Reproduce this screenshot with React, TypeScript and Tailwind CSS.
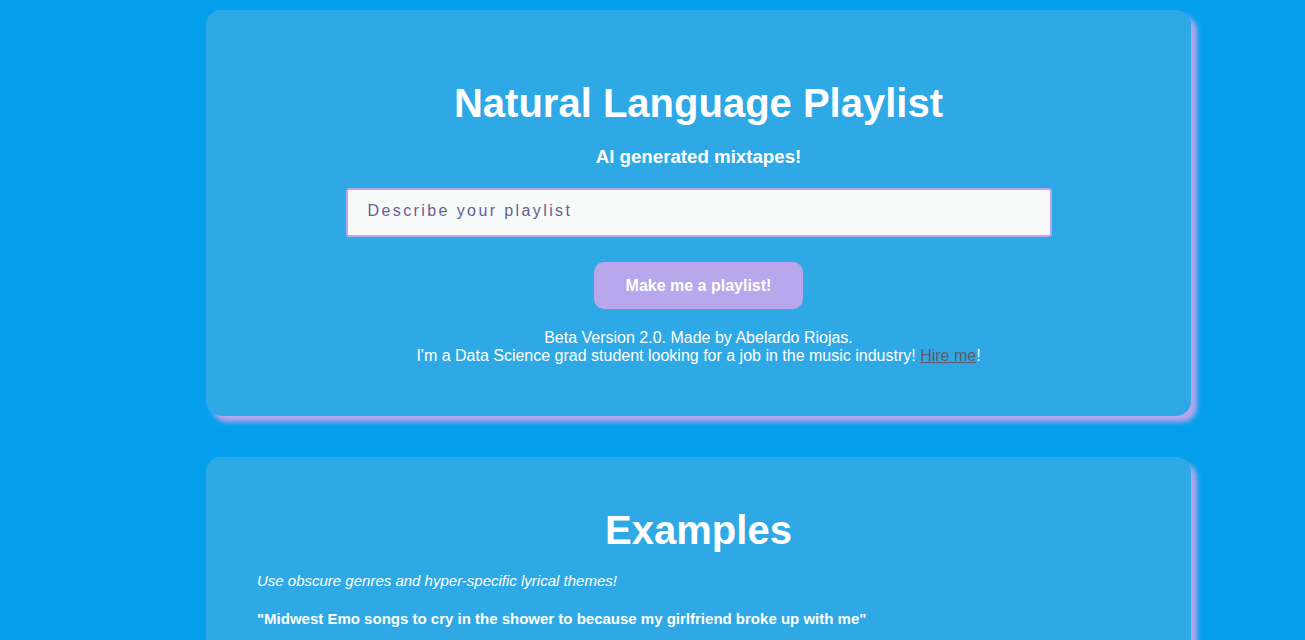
const App = () => {
  return (
    <div
      className="min-h-screen bg-[#039fec] pt-[10px] pb-10 pl-[206px] text-white"
      style={{ fontFamily: '"Liberation Sans", Arial, sans-serif' }}
    >
      {/* Main card */}
      <div className="w-[985px] rounded-[15px] bg-[#2ea9e5] shadow-[6px_6px_5px_#b7a6ec] pt-[70px] pb-[51px] flex flex-col items-center">
        <h1 className="text-[40px] leading-[46px] font-bold">Natural Language Playlist</h1>
        <p className="mt-[20px] text-[18.7px] leading-[21px] font-bold">AI generated mixtapes!</p>
        <input
          type="text"
          placeholder="Describe your playlist"
          className="mt-[21px] w-[706px] h-[49px] rounded-[3px] border-2 border-[#b8a6ee] bg-[#f8f9f9] bg-[radial-gradient(#e6eaef_0.6px,transparent_0.6px)] bg-[length:8px_8px] px-[20px] pb-[4px] text-[16px] tracking-[2.4px] text-[#4a4570] placeholder:text-[#675f91] outline-none"
        />
        <button className="mt-[25px] w-[209px] h-[47px] rounded-[10px] bg-[#b8a7ec] text-[16px] font-bold text-white">
          Make me a playlist!
        </button>
        <div className="mt-[20px] text-center text-[16px] leading-[18px]">
          <p>Beta Version 2.0. Made by Abelardo Riojas.</p>
          <p>
            I'm a Data Science grad student looking for a job in the music industry!{' '}
            <a href="#" className="text-[#5b5b6b] underline">Hire me</a>!
          </p>
        </div>
      </div>

      {/* Examples card */}
      <div className="mt-[41px] w-[985px] rounded-[15px] bg-[#2ea9e5] shadow-[6px_6px_5px_#b7a6ec] pt-[50px] pb-[40px] px-[51px]">
        <h2 className="text-center text-[40px] leading-[46px] font-bold">Examples</h2>
        <p className="mt-[19px] text-[15px] leading-[17px] italic">Use obscure genres and hyper-specific lyrical themes!</p>
        <p className="mt-[21px] text-[15px] leading-[17px] font-bold">
          "Midwest Emo songs to cry in the shower to because my girlfriend broke up with me"
        </p>
      </div>
    </div>
  )
}

export default App
